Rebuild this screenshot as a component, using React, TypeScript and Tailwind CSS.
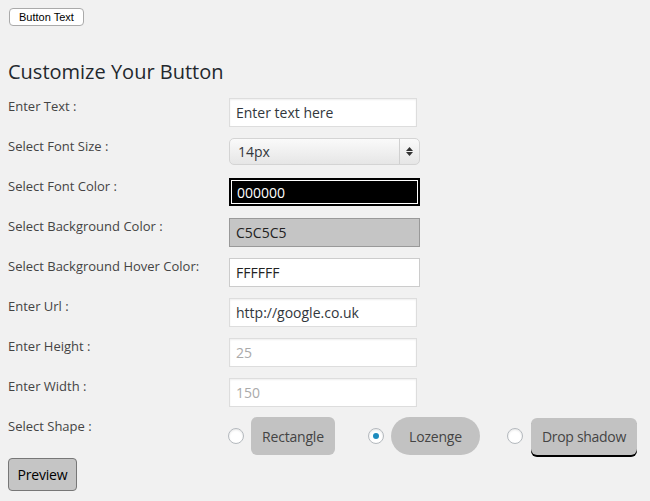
import React from 'react';

const labelCls = 'w-[221px] shrink-0 text-[13px] leading-[18px] text-[#444]';
const inputCls =
  'w-[188px] h-[29px] bg-white border border-[#ddd] shadow-[inset_0_1px_2px_rgba(0,0,0,0.07)] px-[6px] text-[14px] text-[#32373c] outline-none';

const Row = ({ label, children }: { label: string; children: React.ReactNode }) => (
  <div className="flex items-start h-[40px]">
    <div className={labelCls}>{label}</div>
    <div className="pt-[1px]">{children}</div>
  </div>
);

const Radio = ({ checked }: { checked?: boolean }) => (
  <span className="w-[16px] h-[16px] rounded-full bg-white border border-[#b4b9be] shadow-[inset_0_1px_2px_rgba(0,0,0,0.1)] flex items-center justify-center shrink-0">
    {checked && <span className="w-[6px] h-[6px] rounded-full bg-[#1e8cbe]" />}
  </span>
);

export default function App() {
  return (
    <div
      className="w-[650px] h-[501px] bg-[#f1f1f1] overflow-hidden"
      style={{ fontFamily: '"Open Sans", sans-serif' }}
    >
      <div className="flex pl-[9px] pt-[8px]">
        <button
          className="h-[18px] px-[9px] bg-white border border-[#aaa] rounded-[4px] text-[11px] leading-[16px] text-black"
          style={{ fontFamily: '"Liberation Sans", Arial, sans-serif' }}
        >
          Button Text
        </button>
      </div>

      <div className="pl-[8px]">
        <h2 className="mt-[32px] text-[20px] leading-[28px] text-[#23282d]">Customize Your Button</h2>

        <div className="mt-[11px] flex flex-col">
          <Row label="Enter Text :">
            <input className={inputCls} defaultValue="Enter text here" />
          </Row>

          <Row label="Select Font Size :">
            <div className="w-[191px] h-[27px] rounded-[5px] border border-[#d4d4d4] bg-gradient-to-b from-[#fafafa] to-[#e6e6e6] flex items-center text-[14px] text-[#32373c]">
              <span className="flex-1 pl-[8px]">14px</span>
              <span className="w-[20px] h-full border-l border-[#d0d0d0] flex flex-col items-center justify-center gap-[1px]">
                <svg width="7" height="4" viewBox="0 0 7 4"><path d="M3.5 0 L7 4 L0 4 Z" fill="#333" /></svg>
                <svg width="7" height="4" viewBox="0 0 7 4"><path d="M0 0 L7 0 L3.5 4 Z" fill="#333" /></svg>
              </span>
            </div>
          </Row>

          <Row label="Select Font Color :">
            <div className="w-[191px] h-[28px] bg-black border border-black p-[1px]">
              <div className="w-full h-full border border-white flex items-center px-[5px] text-[14px] text-white">000000</div>
            </div>
          </Row>

          <Row label="Select Background Color :">
            <div className="w-[191px] h-[29px] bg-[#c5c5c5] border border-[#999] flex items-center px-[6px] text-[14px] text-[#222]">
              C5C5C5
            </div>
          </Row>

          <Row label="Select Background Hover Color:">
            <div className="w-[191px] h-[29px] bg-white border border-[#ccc] flex items-center px-[6px] text-[14px] text-[#222]">
              FFFFFF
            </div>
          </Row>

          <Row label="Enter Url :">
            <input className={inputCls} defaultValue="http://google.co.uk" />
          </Row>

          <Row label="Enter Height :">
            <input className={`${inputCls} placeholder:text-[#aaa]`} placeholder="25" />
          </Row>

          <Row label="Enter Width :">
            <input className={`${inputCls} placeholder:text-[#aaa]`} placeholder="150" />
          </Row>

          <div className="flex items-start h-[40px]">
            <div className={labelCls}>Select Shape :</div>
            <div className="flex items-center -ml-[1px] mt-[0px]">
              <Radio />
              <button className="ml-[7px] w-[84px] h-[38px] bg-[#c2c2c2] rounded-[6px] text-[14px] text-[#444] tracking-[-0.2px]">
                Rectangle
              </button>
              <span className="ml-[33px]"><Radio checked /></span>
              <button className="ml-[7px] w-[89px] h-[38px] bg-[#c2c2c2] rounded-full text-[14px] text-[#444] tracking-[-0.2px]">
                Lozenge
              </button>
              <span className="ml-[27px]"><Radio /></span>
              <button className="ml-[8px] w-[106px] h-[37px] bg-[#c2c2c2] rounded-[6px] shadow-[0_2px_0_#000] text-[14px] text-[#444] tracking-[-0.3px]">
                Drop shadow
              </button>
            </div>
          </div>
        </div>

        <button className="mt-[1px] w-[69px] h-[33px] bg-[#c5c5c5] border border-[#777] rounded-[4px] text-[14px] text-black tracking-[-0.2px]">
          Preview
        </button>
      </div>
    </div>
  );
}
